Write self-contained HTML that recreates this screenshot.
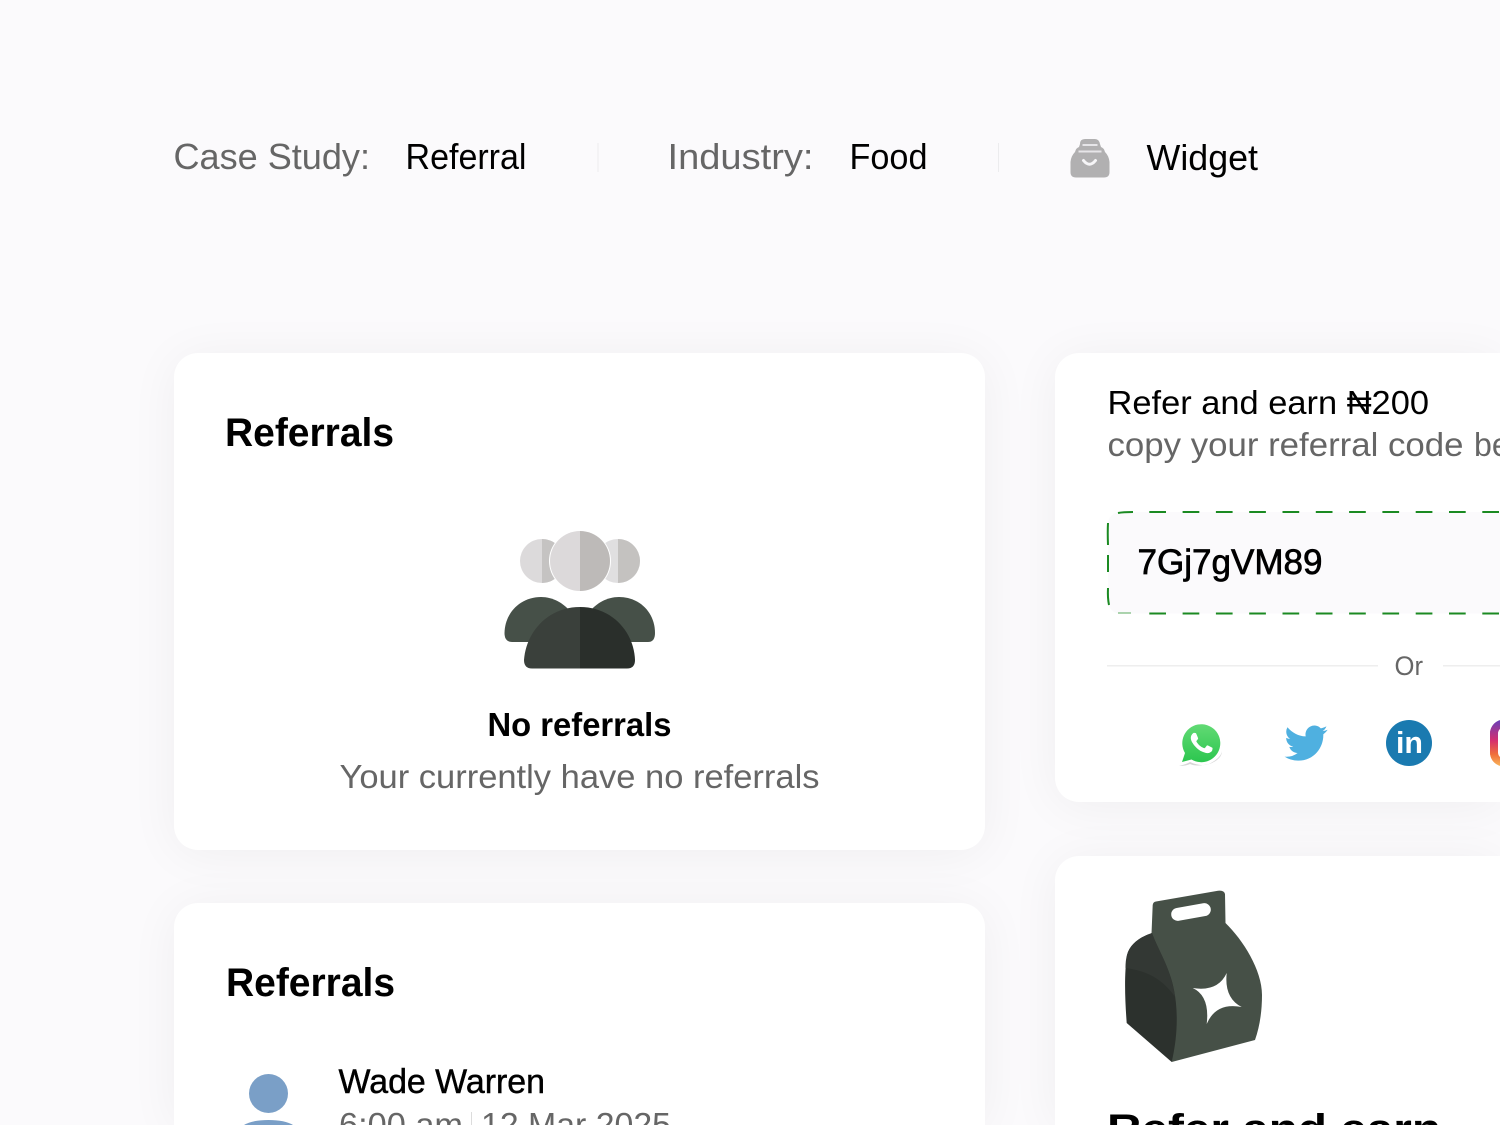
<!DOCTYPE html>
<html lang="en"><head><meta charset="utf-8"><title>Referral widget</title>
<style>
html,body{margin:0;padding:0;width:1500px;height:1125px;overflow:hidden;background:#fbfafc}
#page{position:relative;width:1500px;height:1125px;overflow:hidden;background:#fbfafc}
.card{position:absolute;background:#fff;box-shadow:0 4px 50px rgba(0,0,0,.05)}
svg{position:absolute;left:0;top:0;overflow:hidden}
text{font-family:"Liberation Sans",sans-serif;fill:#000}
.g{fill:#666}
.m{stroke:#000;stroke-width:.45}
.b{font-weight:700}
</style></head><body>
<div id="page">
<div class="card" style="left:174px;top:353px;width:811px;height:497px;border-radius:24px"></div>
<div class="card" style="left:174px;top:903px;width:811px;height:222px;border-radius:24px 24px 0 0"></div>
<div class="card" style="left:1055px;top:353px;width:445px;height:449px;border-radius:24px 0 0 24px"></div>
<div class="card" style="left:1055px;top:856px;width:445px;height:269px;border-radius:24px 0 0 0"></div>
<svg width="1500" height="1125" viewBox="0 0 1500 1125" xmlns="http://www.w3.org/2000/svg">
<defs>
<linearGradient id="wa" x1="0" y1="0" x2="0" y2="1"><stop offset="0" stop-color="#62da74"/><stop offset="1" stop-color="#2cc64f"/></linearGradient>
<linearGradient id="ig" x1="0" y1="0" x2="0" y2="1"><stop offset="0" stop-color="#6a3fb8"/><stop offset=".45" stop-color="#d6306f"/><stop offset=".75" stop-color="#f0703a"/><stop offset="1" stop-color="#f8b25a"/></linearGradient>
</defs>

<!-- header -->
<text class="g" x="173.500" y="169" font-size="36" textLength="196.500" lengthAdjust="spacingAndGlyphs">Case Study:</text>
<text x="405.500" y="169" font-size="36" textLength="121" lengthAdjust="spacingAndGlyphs">Referral</text>
<rect x="597.500" y="143" width="1" height="29" fill="#ececee"/>
<text class="g" x="667.500" y="169" font-size="36" textLength="146" lengthAdjust="spacingAndGlyphs">Industry:</text>
<text x="849.500" y="169" font-size="36" textLength="78" lengthAdjust="spacingAndGlyphs">Food</text>
<rect x="998" y="143" width="1" height="29" fill="#ececee"/>
<path d="M1080 144Q1080 139 1085 139H1095Q1099 139 1100 144L1101 147Q1104 148 1105 152Q1109 156 1109.500 162V172Q1109.500 177.500 1104 177.500H1076Q1070.500 177.500 1070.500 172V162Q1071 156 1075 152Q1076 148 1079 147Z" fill="#b1b0b1"/>
<path d="M1082.500 145H1097.500M1078.500 151.500H1101.500" stroke="#e6e5e8" stroke-width="2" fill="none"/>
<path d="M1083.500 160.500Q1089.500 168 1095.500 160.500" fill="none" stroke="#f6f5f7" stroke-width="3" stroke-linecap="round"/>
<text x="1146.500" y="170" font-size="36" textLength="111.500" lengthAdjust="spacingAndGlyphs">Widget</text>

<!-- referrals empty -->
<text class="b" x="225" y="446" font-size="40" textLength="169" lengthAdjust="spacingAndGlyphs">Referrals</text>
<circle cx="542" cy="561" r="22" fill="#dcdadb"/>
<path d="M542 539a22 22 0 0 1 0 44z" fill="#c5c3c2"/>
<circle cx="618" cy="561" r="22" fill="#e0dfe0"/>
<path d="M618 539a22 22 0 0 1 0 44z" fill="#c4c2c0"/>
<circle cx="580" cy="561" r="31" fill="#fff"/>
<path d="M580 531a30 30 0 0 0 0 60z" fill="#dcd9da"/>
<path d="M580 531a30 30 0 0 1 0 60z" fill="#bdbab8"/>
<path d="M504.500 633C505 612 521 597 541 597C553 597 563 603 570 611L545 642H512Q504.500 642 504.500 633Z" fill="#465048"/>
<path d="M655 633C655 612 639 597 619 597C607 597 597 603 590 611L615 642H648Q655 642 655 633Z" fill="#465048"/>
<path d="M580 607C548 607 526 632 524 660Q524 668.500 532 668.500H580Z" fill="#3a403b"/>
<path d="M580 607C612 607 634 632 635 660Q635 668.500 627 668.500H580Z" fill="#2a2f2b"/>
<text class="b" x="487.500" y="736" font-size="33" textLength="184" lengthAdjust="spacingAndGlyphs">No referrals</text>
<text class="g" x="339.500" y="788" font-size="33" textLength="480" lengthAdjust="spacingAndGlyphs">Your currently have no referrals</text>

<!-- referrals list -->
<text class="b" x="226" y="996" font-size="40" textLength="169" lengthAdjust="spacingAndGlyphs">Referrals</text>
<circle cx="268.500" cy="1093.500" r="19.500" fill="#7a9fc7"/>
<path d="M244 1125Q252 1120 268.500 1120Q285 1120 293 1125Z" fill="#7a9fc7"/>
<text class="m" x="338.500" y="1093" font-size="34" textLength="206.500" lengthAdjust="spacingAndGlyphs" stroke-width=".3">Wade Warren</text>
<text class="g" x="339" y="1136" font-size="33" textLength="124" lengthAdjust="spacingAndGlyphs">6:00 am</text>
<rect x="471" y="1112" width="1" height="13" fill="#dcdcdc"/>
<text class="g" x="481" y="1136" font-size="33" textLength="190" lengthAdjust="spacingAndGlyphs">12 Mar 2025</text>

<!-- refer card -->
<text x="1107.500" y="414" font-size="33" textLength="321.500" lengthAdjust="spacingAndGlyphs">Refer and earn ₦200</text>
<text class="g" x="1107.500" y="456" font-size="33" textLength="356" lengthAdjust="spacingAndGlyphs">copy your referral code</text>
<text class="g" x="1474" y="456" font-size="33" textLength="84" lengthAdjust="spacingAndGlyphs">below</text>
<rect x="1108" y="512" width="392" height="101.500" rx="12" fill="#fbfafc"/>
<rect x="1480" y="512" width="20" height="101.500" fill="#fbfafc"/>
<path d="M1149.300 512H1500M1149.300 613.500H1500" stroke="#1b8a22" stroke-width="2" stroke-dasharray="16.700 16.600" fill="none"/>
<path d="M1118 513Q1123 512 1133 512M1108 523Q1107.500 532 1108 545M1108 555V572M1108 588Q1107.500 598 1109 605" stroke="#1b8a22" stroke-width="2" fill="none"/>
<path d="M1118 613H1131" stroke="#1b8a22" stroke-width="1.200" stroke-opacity=".6" fill="none"/>
<text class="m" x="1137.500" y="574" font-size="35" textLength="185" lengthAdjust="spacingAndGlyphs" style="stroke-width:.7">7Gj7gVM89</text>
<rect x="1107" y="665" width="271" height="1.500" fill="#eeeeee"/>
<text class="g" x="1394.500" y="675" font-size="27" textLength="28.500" lengthAdjust="spacingAndGlyphs">Or</text>
<rect x="1443" y="665" width="57" height="1.500" fill="#eeeeee"/>

<!-- whatsapp -->
<path d="M1179 766Q1187 764 1190 762Q1205 769 1217 760Q1222 756 1222 751Q1221 758 1209 764Q1196 767 1190 764Q1186 766 1179 766Z" fill="#d6d6d6"/>
<path d="M1182 762L1185 753A19 19 0 1 1 1191.500 759.500Z" fill="url(#wa)"/>
<g transform="translate(1180 721.400) scale(1.800)"><path fill="#fff" d="M17.472 14.382c-.297-.149-1.758-.867-2.030-.967-.273-.099-.471-.148-.670.150-.197.297-.767.966-.940 1.164-.173.199-.347.223-.644.075-.297-.150-1.255-.463-2.390-1.475-.883-.788-1.480-1.761-1.653-2.059-.173-.297-.018-.458.130-.606.134-.133.298-.347.446-.520.149-.174.198-.298.298-.497.099-.198.050-.371-.025-.520-.075-.149-.669-1.612-.916-2.207-.242-.579-.487-.500-.669-.510-.173-.008-.371-.010-.570-.010-.198 0-.520.074-.792.372-.272.297-1.040 1.016-1.040 2.479 0 1.462 1.065 2.875 1.213 3.074.149.198 2.096 3.200 5.077 4.487.709.306 1.262.489 1.694.625.712.227 1.360.195 1.871.118.571-.085 1.758-.719 2.006-1.413.248-.694.248-1.289.173-1.413-.074-.124-.272-.198-.570-.347z"/></g>

<!-- twitter -->
<g transform="translate(1284.500 721.500) scale(1.800)"><path fill="#4fb0e0" d="M23.953 4.570a10 10 0 01-2.825.775 4.958 4.958 0 002.163-2.723c-.951.555-2.005.959-3.127 1.184a4.920 4.920 0 00-8.384 4.482C7.690 8.095 4.067 6.130 1.640 3.162a4.822 4.822 0 00-.666 2.475c0 1.710.870 3.213 2.188 4.096a4.904 4.904 0 01-2.228-.616v.060a4.923 4.923 0 003.946 4.827 4.996 4.996 0 01-2.212.085 4.936 4.936 0 004.604 3.417 9.867 9.867 0 01-6.102 2.105c-.390 0-.779-.023-1.170-.067a13.995 13.995 0 007.557 2.209c9.053 0 13.998-7.496 13.998-13.985 0-.210 0-.420-.015-.630A9.935 9.935 0 0024 4.590z"/></g>

<!-- linkedin -->
<circle cx="1409" cy="743" r="23" fill="#1a7ab0"/>
<text class="b" x="1396" y="753" font-size="31" textLength="27" lengthAdjust="spacingAndGlyphs" style="fill:#fff">in</text>

<!-- instagram -->
<path d="M1500 719.500H1504A14 14 0 0 0 1490 733.500V752.500A14 14 0 0 0 1504 766.500H1500Z" fill="url(#ig)"/>
<path d="M1500 727.500H1504A6 6 0 0 0 1498 733.500V752.500A6 6 0 0 0 1504 758.500H1500Z" fill="#fff"/>
<path d="M1490 733.500A14 14 0 0 1 1500 720.300V727.800A6 6 0 0 0 1498 733.500V752.500A6 6 0 0 0 1500 758.200V765.700A14 14 0 0 1 1490 752.500Z" fill="url(#ig)"/>

<!-- box -->
<path d="M1152.700 905Q1153 902 1156 901.500L1218 890.800Q1224 890 1225 894L1225.500 923C1243 940 1262 970 1262 995Q1262 1020 1255 1040L1171.700 1062L1150 970Z" fill="#465047"/>
<path d="M1152 933C1140 937 1130 944 1127 955C1124 975 1125 1000 1126.700 1023L1171.700 1062C1178 1035 1178 1010 1174 990C1170 968 1158 950 1152 933Z" fill="#2c312d"/>
<path d="M1152 933C1140 937 1130 944 1127 955Q1125.500 960 1125.500 968C1140 970 1160 975 1175 997C1171 968 1158 950 1152 933Z" fill="#333834"/>
<rect x="1171" y="905.500" width="40" height="13" rx="6.500" transform="rotate(-10 1191 912)" fill="#fff"/>
<path d="M1226.700 973Q1224 998 1241.700 1007Q1216 1002 1206.700 1024Q1210 996 1192.700 988Q1218 992 1226.700 973Z" fill="#fff"/>
<text class="b" x="1107" y="1142" font-size="40" textLength="334" lengthAdjust="spacingAndGlyphs">Refer and earn</text>
</svg>
</div>
</body></html>
